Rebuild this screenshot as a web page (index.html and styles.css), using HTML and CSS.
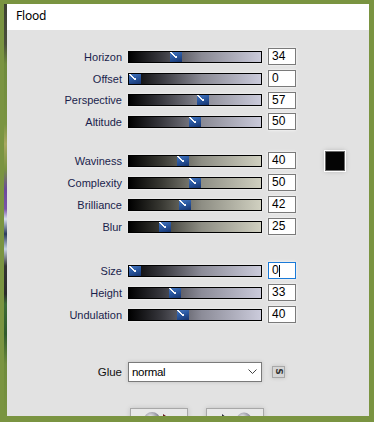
FILE: index.html
```html
<!DOCTYPE html>
<html>
<head>
<meta charset="utf-8">
<link rel="stylesheet" href="styles.css">
</head>
<body>
<div class="screen">
  <div class="edge"></div>
  <div class="win">
    <div class="titlebar">Flood</div>
    <div class="content">
      <div class="group g1">
        <div class="row"><span class="lbl">Horizon</span><div class="track t1"><span class="thumb" style="left:41px"></span></div><div class="num">34</div></div>
        <div class="row"><span class="lbl">Offset</span><div class="track t1"><span class="thumb" style="left:0px"></span></div><div class="num">0</div></div>
        <div class="row"><span class="lbl">Perspective</span><div class="track t1"><span class="thumb" style="left:68px"></span></div><div class="num">57</div></div>
        <div class="row"><span class="lbl">Altitude</span><div class="track t1"><span class="thumb" style="left:60px"></span></div><div class="num">50</div></div>
      </div>
      <div class="group g2">
        <div class="row"><span class="lbl">Waviness</span><div class="track t2"><span class="thumb" style="left:48px"></span></div><div class="num">40</div><div class="swatch"></div></div>
        <div class="row"><span class="lbl">Complexity</span><div class="track t2"><span class="thumb" style="left:60px"></span></div><div class="num">50</div></div>
        <div class="row"><span class="lbl">Brilliance</span><div class="track t2"><span class="thumb" style="left:50px"></span></div><div class="num">42</div></div>
        <div class="row"><span class="lbl">Blur</span><div class="track t2"><span class="thumb" style="left:30px"></span></div><div class="num">25</div></div>
      </div>
      <div class="group g3">
        <div class="row"><span class="lbl">Size</span><div class="track t3"><span class="thumb" style="left:0px"></span></div><div class="num focus">0<span class="caret"></span></div></div>
        <div class="row"><span class="lbl">Height</span><div class="track t3"><span class="thumb" style="left:40px"></span></div><div class="num">33</div></div>
        <div class="row"><span class="lbl">Undulation</span><div class="track t3"><span class="thumb" style="left:48px"></span></div><div class="num">40</div></div>
      </div>
      <div class="row glue-row">
        <span class="lbl glue">Glue</span>
        <div class="select"><span>normal</span>
          <svg class="chev" width="9" height="6" viewBox="0 0 9 6"><path d="M0.5 0.5 L4.5 4.5 L8.5 0.5" fill="none" stroke="#444" stroke-width="1"/></svg>
        </div>
        <div class="sbtn"><span>S</span></div>
      </div>
      <div class="buttons">
        <div class="btn">
          <svg width="58" height="24" viewBox="0 0 58 24"><defs><radialGradient id="sp1" cx="0.4" cy="0.35" r="0.7"><stop offset="0" stop-color="#f4f4f4"/><stop offset="0.6" stop-color="#9a9aa6"/><stop offset="1" stop-color="#4a4a58"/></radialGradient></defs><circle cx="22" cy="12" r="8" fill="url(#sp1)"/><path d="M33 6 L39 10 L33 14 Z" fill="#6a1a20"/></svg>
        </div>
        <div class="btn">
          <svg width="58" height="24" viewBox="0 0 58 24"><defs><radialGradient id="sp2" cx="0.4" cy="0.35" r="0.7"><stop offset="0" stop-color="#f4f4f4"/><stop offset="0.6" stop-color="#9a9aa6"/><stop offset="1" stop-color="#4a4a58"/></radialGradient></defs><path d="M16 6 L21 10 L16 14 Z" fill="#2a2a3a"/><circle cx="38" cy="12" r="7.5" fill="url(#sp2)"/></svg>
        </div>
      </div>
    </div>
  </div>
</div>
</body>
</html>
```
FILE: styles.css
```css
html, body {
  margin: 0;
  padding: 0;
}
body {
  width: 374px;
  height: 422px;
  overflow: hidden;
  background: #7a9441;
}
.screen {
  display: flex;
  padding-top: 4px;
  height: 422px;
  box-sizing: border-box;
}
.edge {
  width: 7px;
  flex: none;
  background:
    linear-gradient(to bottom, #3c4032 0px, #4a4e3c 40px, #6e8a3c 60px, #7a9441 120px, #a8a860 140px, #7a9441 165px, #6b4a9a 185px, #7a55a8 205px, #d8e0ee 215px, #2a3a5a 230px, #c8d4e4 245px, #333 262px, #2a2a2a 290px, #3c6a36 300px, #2f5a2c 330px, #6e8a3c 360px, #7a9441 412px) no-repeat right top / 3px 100%,
    #7a9441;
}
.win {
  width: 362px;
  height: 412px;
  flex: none;
  overflow: hidden;
  background: #e2e2e2;
  display: flex;
  flex-direction: column;
}
.titlebar {
  height: 26px;
  flex: none;
  box-sizing: border-box;
  background: #ffffff;
  padding-left: 9px;
  padding-bottom: 3px;
  line-height: 23px;
  font-family: "Noto Sans", "Open Sans", sans-serif;
  font-size: 12px;
  letter-spacing: -0.2px;
  color: #000;
}
.content {
  padding-top: 16px;
  display: flex;
  flex-direction: column;
}
.group {
  display: flex;
  flex-direction: column;
}
.g1 { margin-bottom: 17px; }
.g2 { margin-bottom: 22px; }
.g3 { margin-bottom: 35px; }
.row {
  display: grid;
  grid-template-columns: 115px 134px 28px auto;
  column-gap: 6px;
  align-items: center;
  height: 22px;
}
.g1 .row { height: 21.7px; }
.lbl {
  text-align: right;
  font-family: "Liberation Sans", Arial, sans-serif;
  font-size: 11px;
  color: #1a1e4c;
  white-space: nowrap;
}
.lbl.glue {
  color: #111;
  font-size: 11.5px;
}
.track {
  position: relative;
  height: 12px;
  box-sizing: border-box;
  border: 1px solid #000;
  box-shadow: 0 0 2px rgba(255,255,255,0.8);
}
.t1 { background: linear-gradient(to right, #000 0%, #3a3a40 25%, #8a8a94 55%, #cacada 100%); }
.t2 { background: linear-gradient(to right, #000 0%, #3a3a34 25%, #8e8e84 55%, #d0d0c0 100%); }
.t3 { background: linear-gradient(to right, #000 0%, #38383e 25%, #8c8c98 55%, #cbcbdb 100%); }
.thumb {
  position: absolute;
  top: 0;
  width: 12px;
  height: 10px;
  background:
    linear-gradient(to top right, transparent 0 42%, rgba(255,255,255,0.95) 42% 60%, transparent 60%) no-repeat 0 0 / 7px 6px,
    linear-gradient(160deg, #4878c0 0%, #2a58a0 45%, #15336e 100%);
}
.num {
  width: 28px;
  height: 17px;
  box-sizing: border-box;
  border: 1px solid #7a7a7a;
  background: #fff;
  font-family: "Liberation Sans", Arial, sans-serif;
  font-size: 12px;
  line-height: 15px;
  padding-left: 3px;
  color: #000;
  box-shadow: 0 0 3px rgba(255,255,255,0.9);
}
.num.focus {
  border-color: #1a7ad8;
  display: flex;
  align-items: center;
}
.caret {
  display: inline-block;
  width: 1px;
  height: 12px;
  background: #000;
}
.swatch {
  margin-left: 23px;
  width: 20px;
  height: 20px;
  box-sizing: border-box;
  background: #050505;
  border: 1px solid #6a6a6a;
  box-shadow: 0 0 0 1px #fff, 0 0 5px rgba(0,0,0,0.25);
}
.select {
  height: 20px;
  box-sizing: border-box;
  border: 1px solid #7a7a7a;
  background: #fff;
  display: flex;
  align-items: center;
  justify-content: space-between;
  padding-left: 3px;
  padding-right: 4px;
  font-family: "Liberation Sans", Arial, sans-serif;
  font-size: 11.5px;
  letter-spacing: -0.3px;
  color: #000;
  box-shadow: 0 0 4px rgba(0,0,0,0.15);
}
.chev {
  display: block;
}
.sbtn {
  margin-left: 4px;
  width: 13px;
  height: 12px;
  box-sizing: border-box;
  border: 1px solid #a8a8a8;
  background: #d6d6d6;
  display: flex;
  align-items: center;
  justify-content: center;
  box-shadow: 0 0 4px rgba(0,0,0,0.15);
}
.sbtn span {
  display: block;
  transform: rotate(90deg);
  font-family: "DejaVu Sans", sans-serif;
  font-weight: bold;
  font-size: 9px;
  line-height: 9px;
  color: #333;
}
.buttons {
  display: flex;
  gap: 18px;
  margin-top: 25px;
  padding-left: 123px;
}
.btn {
  width: 58px;
  height: 24px;
  box-sizing: border-box;
  border: 1px solid #a8a8a8;
  background: #e8e8e8;
  box-shadow: 0 0 5px rgba(0,0,0,0.15);
  overflow: hidden;
}
.btn svg {
  display: block;
  margin: -1px 0 0 -1px;
}
```
